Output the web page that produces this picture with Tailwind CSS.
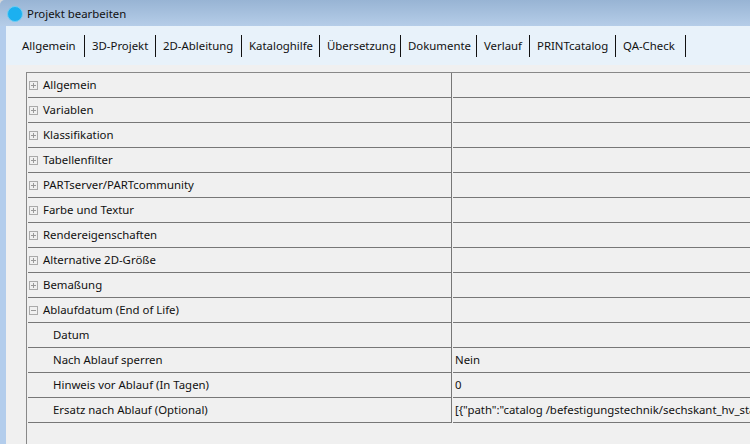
<!DOCTYPE html>
<html lang="de">
<head>
  <meta charset="UTF-8" />
  <title>Projekt bearbeiten</title>
  <script src="https://cdn.jsdelivr.net/npm/@tailwindcss/browser@4"></script>
</head>
<body class="w-[750px] h-[444px] overflow-hidden bg-[#d8d8d8] font-['Noto_Sans',sans-serif] text-[11.4px] text-[#111]">
  <div class="h-full rounded-tl-[5px] overflow-hidden bg-[#b3cdec]">
    <!-- titlebar -->
    <div class="h-[26px] flex items-center pl-[7px] gap-[4px] bg-gradient-to-b from-[#98b4d4] to-[#b5cde8]">
      <div class="w-[16px] h-[16px] rounded-full bg-[#1cb0f0] border border-[#6fcdf2] mt-[2px]"></div>
      <span class="mt-[2px]">Projekt bearbeiten</span>
    </div>

    <div class="ml-[6px] h-[418px] bg-[#f0f0f0] flex flex-col">
      <!-- tabs -->
      <div class="h-[39px] pl-[16px] pt-[9px] bg-[#e8f2fa] flex items-start">
        <div class="w-[62px] h-[22px] flex items-center">Allgemein</div>
        <div class="w-[71px] h-[22px] pl-[7px] flex items-center border-l border-[#111]">3D-Projekt</div>
        <div class="w-[86px] h-[22px] pl-[7px] flex items-center border-l border-[#111]">2D-Ableitung</div>
        <div class="w-[78px] h-[22px] pl-[7px] flex items-center border-l border-[#111]">Kataloghilfe</div>
        <div class="w-[81px] h-[22px] pl-[7px] flex items-center border-l border-[#111]">Übersetzung</div>
        <div class="w-[76px] h-[22px] pl-[7px] flex items-center border-l border-[#111]">Dokumente</div>
        <div class="w-[53px] h-[22px] pl-[7px] flex items-center border-l border-[#111]">Verlauf</div>
        <div class="w-[86px] h-[22px] pl-[7px] flex items-center border-l border-[#111]">PRINTcatalog</div>
        <div class="w-[71px] h-[22px] pl-[7px] flex items-center border-x border-[#111]">QA-Check</div>
      </div>

      <!-- property grid -->
      <div class="ml-[20px] mt-[7px] flex-1 border-l border-t border-[#888] pl-px">
        <div id="grid" class="grid grid-cols-[423px_minmax(0,1fr)] auto-rows-[25px]"></div>
      </div>
    </div>
  </div>

  <script>
    const rows = [
      ["plus", "Allgemein"], ["plus", "Variablen"], ["plus", "Klassifikation"], ["plus", "Tabellenfilter"],
      ["plus", "PARTserver/PARTcommunity"], ["plus", "Farbe und Textur"], ["plus", "Rendereigenschaften"],
      ["plus", "Alternative 2D-Größe"], ["plus", "Bemaßung"], ["minus", "Ablaufdatum (End of Life)"],
      [null, "Datum", ""], [null, "Nach Ablauf sperren", "Nein"], [null, "Hinweis vor Ablauf (In Tagen)", "0"],
      [null, "Ersatz nach Ablauf (Optional)", '[{"path":"catalog /befestigungstechnik/sechskant_hv_sta']
    ];

    function boxIcon(type) {
      const bar = type === "plus" ? '<path d="M4.5 2v5M2 4.5h5" stroke="#999"/>' : '<path d="M2 4.5h5" stroke="#999"/>';
      return `<svg class="w-[9px] h-[9px] shrink-0" viewBox="0 0 9 9" fill="none"><rect x=".5" y=".5" width="8" height="8" stroke="#aaa"/>${bar}</svg>`;
    }

    document.getElementById("grid").innerHTML = rows.map(([icon, label, value]) => `
      <div class="flex items-center gap-[5px] border-b border-[#777] ${icon ? "pl-[1px]" : "pl-[25px]"}">${icon ? boxIcon(icon) : ""}${label}</div>
      <div class="min-w-0 border-l border-[#777] pl-px"><div class="h-full flex items-center border-b border-[#777] pl-[2px] overflow-hidden whitespace-nowrap">${value || ""}</div></div>
    `).join("");
  </script>
</body>
</html>
